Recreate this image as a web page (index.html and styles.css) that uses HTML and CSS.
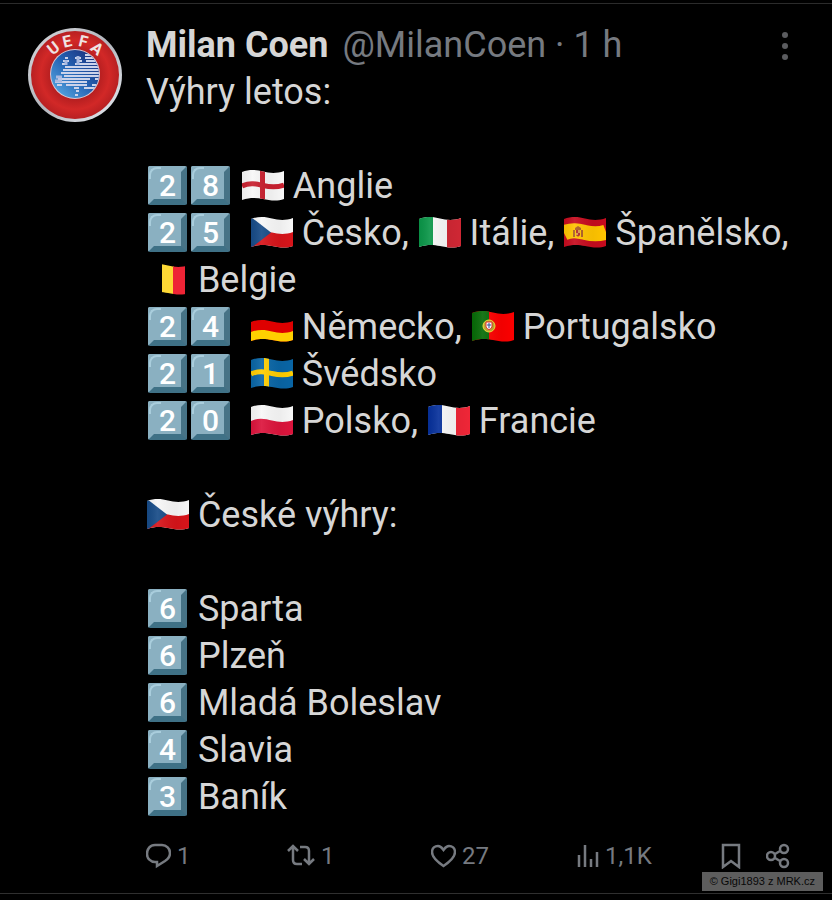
FILE: index.html
```html
<!DOCTYPE html>
<html lang="cs">
<head>
  <meta charset="UTF-8">
  <meta name="viewport" content="width=device-width, initial-scale=1.0">
  <title>Milan Coen</title>
  <link rel="stylesheet" href="styles.css">
</head>
<body>
  <!-- flags, all share the same waving outline -->
  <svg class="defs" width="0" height="0" aria-hidden="true">
    <defs>
      <clipPath id="wave">
        <path d="M0 2C8-1 15 0 21 1.500S34 4 42 1V29C34 32 27 30 21 29S9 27 0 30Z"/>
      </clipPath>
      <linearGradient id="shade" x1="0" x2="1" y1="0" y2="0">
        <stop offset="0" stop-color="#000" stop-opacity=".05"/>
        <stop offset=".25" stop-color="#fff" stop-opacity=".08"/>
        <stop offset=".7" stop-color="#000" stop-opacity=".04"/>
        <stop offset="1" stop-color="#000" stop-opacity="0"/>
      </linearGradient>
      <symbol id="england" viewBox="0 0 42 31">
        <g clip-path="url(#wave)">
          <path fill="#f7f7f7" d="M0 0h42v31H0z"/>
          <path fill="#c8202f" d="M18 0h5v31h-5z"/>
          <path fill="none" stroke="#c8202f" stroke-width="5" d="M0 16C8 12 15 14 21 15.500S34 18 42 15"/>
          <path fill="url(#shade)" d="M0 0h42v31H0z"/>
        </g>
      </symbol>
      <symbol id="czechia" viewBox="0 0 42 31">
        <g clip-path="url(#wave)">
          <path fill="#f7f7f7" d="M0 0h42v31H0z"/>
          <path fill="#d7141a" d="M0 16C8 12 15 14 21 15.500S34 18 42 15V31H0Z"/>
          <path fill="#174b87" d="M0 0L20 15.500 0 31Z"/>
          <path fill="url(#shade)" d="M0 0h42v31H0z"/>
        </g>
      </symbol>
      <symbol id="italy" viewBox="0 0 42 31">
        <g clip-path="url(#wave)">
          <path fill="#f7f7f7" d="M0 0h42v31H0z"/>
          <path fill="#0a9648" d="M0 0h14v31H0z"/>
          <path fill="#cf2734" d="M28 0h14v31H28z"/>
          <path fill="url(#shade)" d="M0 0h42v31H0z"/>
        </g>
      </symbol>
      <symbol id="spain" viewBox="0 0 42 31">
        <g clip-path="url(#wave)">
          <path fill="#c60b1e" d="M0 0h42v31H0z"/>
          <path fill="none" stroke="#ffc400" stroke-width="15" d="M0 16C8 12 15 14 21 15.500S34 18 42 15"/>
          <path fill="#ad5f24" d="M9 13h2v7H9zM17 13h2v7h-2zM11 11l3-2 3 2v2h-6z"/>
          <path fill="#b52a2a" d="M12 13h4v5q-2 3-4 0z"/>
          <path fill="#d99a4a" d="M14 13h2v3h-2zM12 16h2v2h-2z"/>
          <path fill="url(#shade)" d="M0 0h42v31H0z"/>
        </g>
      </symbol>
      <symbol id="belgium" viewBox="0 0 42 31">
        <g clip-path="url(#wave)">
          <path fill="#fdd835" d="M15 0h12v31H15z"/>
          <path fill="#ee2435" d="M26 0h12v31H26z"/>
          <path fill="#000" d="M38 0h4v31h-4z"/>
        </g>
      </symbol>
      <symbol id="germany" viewBox="0 0 42 31">
        <g clip-path="url(#wave)">
          <path fill="#de0000" d="M0 11C8 8 15 9 21 10.500S34 13 42 10V31H0Z"/>
          <path fill="#ffcf00" d="M0 21C8 18 15 19 21 20.500S34 23 42 20V31H0Z"/>
        </g>
      </symbol>
      <symbol id="portugal" viewBox="0 0 42 31">
        <g clip-path="url(#wave)">
          <path fill="#fb0000" d="M0 0h42v31H0z"/>
          <path fill="#066b06" d="M0 0h17v31H0z"/>
          <circle cx="17" cy="15" r="6" fill="#b8a52b" stroke="#f5dd31"/>
          <path fill="#fff" stroke="#e32020" d="M14 11h6v5q-3 5-6 0z"/>
          <path fill="none" stroke="#294b93" d="M17 12v5M15 14h4"/>
          <path fill="url(#shade)" d="M0 0h42v31H0z"/>
        </g>
      </symbol>
      <symbol id="sweden" viewBox="0 0 42 31">
        <g clip-path="url(#wave)">
          <path fill="#0965a5" d="M0 0h42v31H0z"/>
          <path fill="#ffcd00" d="M13 0h5v31h-5z"/>
          <path fill="none" stroke="#ffcd00" stroke-width="5" d="M0 16C8 12 15 14 21 15.500S34 18 42 15"/>
          <path fill="url(#shade)" d="M0 0h42v31H0z"/>
        </g>
      </symbol>
      <symbol id="poland" viewBox="0 0 42 31">
        <g clip-path="url(#wave)">
          <path fill="#f7f7f7" d="M0 0h42v31H0z"/>
          <path fill="#dc143c" d="M0 16C8 12 15 14 21 15.500S34 18 42 15V31H0Z"/>
          <path fill="url(#shade)" d="M0 0h42v31H0z"/>
        </g>
      </symbol>
      <symbol id="france" viewBox="0 0 42 31">
        <g clip-path="url(#wave)">
          <path fill="#f7f7f7" d="M0 0h42v31H0z"/>
          <path fill="#06309b" d="M0 0h14v31H0z"/>
          <path fill="#ef2637" d="M28 0h14v31H28z"/>
          <path fill="url(#shade)" d="M0 0h42v31H0z"/>
        </g>
      </symbol>
    </defs>
  </svg>

  <article class="post">
    <svg class="avatar" viewBox="0 0 94 94" role="img" aria-label="UEFA">
      <defs>
        <linearGradient id="rim" x1="0" y1="0" x2="1" y2="1">
          <stop offset="0" stop-color="#d5d8dc"/>
          <stop offset=".5" stop-color="#b3b6bd"/>
          <stop offset="1" stop-color="#e9edf3"/>
        </linearGradient>
        <radialGradient id="red" cx=".5" cy=".5" r=".5">
          <stop offset=".5" stop-color="#b01d1f"/>
          <stop offset=".78" stop-color="#d22827"/>
          <stop offset="1" stop-color="#b82022"/>
        </radialGradient>
        <linearGradient id="sea" x1="0" y1="1" x2="1" y2="0">
          <stop offset="0" stop-color="#5fb4ea"/>
          <stop offset=".5" stop-color="#2563b4"/>
          <stop offset="1" stop-color="#1a2670"/>
        </linearGradient>
        <clipPath id="globe"><circle cx="47" cy="46" r="24"/></clipPath>
      </defs>
      <circle cx="47" cy="47" r="47" fill="url(#rim)"/>
      <circle cx="47" cy="47" r="44" fill="url(#red)"/>
      <circle cx="47" cy="46" r="25" fill="#d9c9d4"/>
      <circle cx="47" cy="46" r="24" fill="url(#sea)"/>
      <g clip-path="url(#globe)" fill="none" stroke="#ccd3ea">
        <path stroke-width="2" d="M57 27h14M37 30h3M47 30h6M57 30h16M35 33h6M49 33h5M58 33h15M34 36h5M47 36h25M37 39h35M35 42h37M33 45h39M36 48h36M30 51h32M67 51h6M27 54h32M70 54h3M29 57h5M38 57h21M64 57h8M46 60h5M56 60h14M48 63h3M47 67h3"/>
        <path stroke-width="3" stroke="#a9b9e0" d="M28 49h6M27 53h7M50 28v9M38 32v5"/>
      </g>
      <g class="avatar-text">
        <text x="47" y="18" transform="rotate(-39 47 47)">U</text>
        <text x="47" y="18" transform="rotate(-13 47 47)">E</text>
        <text x="47" y="18" transform="rotate(14 47 47)">F</text>
        <text x="47" y="18" transform="rotate(40 47 47)">A</text>
      </g>
    </svg>

    <div class="content">
      <header class="post-header">
        <strong class="name">Milan Coen</strong>
        <span class="handle">@MilanCoen · 1 h</span>
        <button type="button" class="more" aria-label="Další">
          <svg width="8" height="30" viewBox="0 0 8 30" fill="#5b5c5f">
            <circle cx="4" cy="4" r="3"/>
            <circle cx="4" cy="15" r="3"/>
            <circle cx="4" cy="26" r="3"/>
          </svg>
        </button>
      </header>

      <div class="text">
        <p>Výhry letos:</p>
        <div class="block">
          <p><span class="key">2</span><span class="key">8</span> <svg class="flag"><use href="#england"/></svg> Anglie</p>
          <p><span class="key">2</span><span class="key">5</span>  <svg class="flag"><use href="#czechia"/></svg> Česko, <svg class="flag"><use href="#italy"/></svg> Itálie, <svg class="flag"><use href="#spain"/></svg> Španělsko, <svg class="flag"><use href="#belgium"/></svg> Belgie</p>
          <p><span class="key">2</span><span class="key">4</span>  <svg class="flag"><use href="#germany"/></svg> Německo, <svg class="flag"><use href="#portugal"/></svg> Portugalsko</p>
          <p><span class="key">2</span><span class="key">1</span>  <svg class="flag"><use href="#sweden"/></svg> Švédsko</p>
          <p><span class="key">2</span><span class="key">0</span>  <svg class="flag"><use href="#poland"/></svg> Polsko, <svg class="flag"><use href="#france"/></svg> Francie</p>
        </div>
        <p class="block"><svg class="flag"><use href="#czechia"/></svg> České výhry:</p>
        <div class="block">
          <p><span class="key">6</span> Sparta</p>
          <p><span class="key">6</span> Plzeň</p>
          <p><span class="key">6</span> Mladá Boleslav</p>
          <p><span class="key">4</span> Slavia</p>
          <p><span class="key">3</span> Baník</p>
        </div>
      </div>

      <footer class="actions">
        <button type="button" class="action">
          <svg width="25" height="26" viewBox="0 0 25 26"><path d="M9 2h7a8 8 0 0 1 8 8c0 4-2 6-5 8l-8 5v-4H9a8 8 0 0 1-8-8c0-5 3-9 8-9z"/></svg>
          1
        </button>
        <button type="button" class="action">
          <svg width="28" height="26" viewBox="0 0 28 26"><path d="M1 8l5-5 5 5M6 4v13q0 4 4 4h5M13 4h5q4 0 4 4v13M17 16l5 5 5-5"/></svg>
          1
        </button>
        <button type="button" class="action">
          <svg width="25" height="26" viewBox="0 0 25 26"><path d="M12.500 23C5 18 1 14 1 9c0-4 3-6 6-6s4 2 5.500 4C14 5 15 3 18 3s6 2 6 6c0 5-4 9-11.500 14z"/></svg>
          27
        </button>
        <button type="button" class="action">
          <svg width="22" height="26" viewBox="0 0 22 26"><path d="M2 24V12M8 24V2M14 24v-8M20 24V9"/></svg>
          1,1K
        </button>
        <div class="tools">
          <button type="button" class="action" aria-label="Záložka">
            <svg width="20" height="26" viewBox="0 0 20 26"><path d="M2 2h16v22l-8-6-8 6z"/></svg>
          </button>
          <button type="button" class="action" aria-label="Sdílet">
            <svg width="24" height="26" viewBox="0 0 24 26"><circle cx="5" cy="13" r="4"/><circle cx="18" cy="6" r="4"/><circle cx="18" cy="20" r="4"/><path d="M9 11l5-3M9 15l5 3"/></svg>
          </button>
        </div>
      </footer>
    </div>
    <small class="watermark">© Gigi1893 z MRK.cz</small>
  </article>
</body>
</html>
```

FILE: styles.css
```css
* {
  box-sizing: border-box;
}
body {
  margin: 0;
  padding: 3px 0 0;
  background-color: #000;
  color: #d6d6d6;
  font-family: Roboto, sans-serif;
  font-size: 36px;
  line-height: 47px;
}
p {
  margin: 0;
}
button {
  padding: 0;
  border: none;
  background: none;
  color: inherit;
  font: inherit;
  cursor: pointer;
}
.defs {
  position: absolute;
}
.post {
  position: relative;
  display: flex;
  gap: 24px;
  padding: 18px 28px 22px;
  border-top: 1px solid #2b2b2b;
  border-bottom: 1px solid #2f2f2f;
}
.avatar {
  flex: none;
  width: 94px;
  height: 94px;
  margin-top: 6px;
}
.avatar-text {
  fill: #efe3e3;
  font-size: 16px;
  font-weight: bold;
  text-anchor: middle;
}
.content {
  flex: 1;
  min-width: 0;
}
.post-header {
  display: flex;
  align-items: center;
  gap: 14px;
}
.handle {
  color: #767a80;
}
.more {
  display: flex;
  margin-left: auto;
  padding: 4px 15px;
}
.text p {
  white-space: pre-wrap;
}
.text .block {
  margin-top: 47px;
}

/* keycap emoji */
.key {
  display: inline-flex;
  align-items: center;
  justify-content: center;
  position: relative;
  width: 39px;
  height: 39px;
  margin: 0 2px;
  border: 6px solid #8ab0c1;
  border-right-color: #477386;
  border-bottom-color: #3f7186;
  border-radius: 2px;
  background-color: #8ab0c1;
  color: #fff;
  font-size: 30px;
  font-weight: 500;
  line-height: 27px;
  vertical-align: 2px;
}
.key::before {
  content: "";
  position: absolute;
  top: -5px;
  left: -5px;
  width: 10px;
  height: 10px;
  border-top: 2px solid #a9cddc;
  border-left: 2px solid #a9cddc;
  border-radius: 8px 0 0 0;
}
.flag {
  width: 42px;
  height: 31px;
  margin-left: 1px;
  vertical-align: -3px;
}

.actions {
  display: grid;
  grid-template-columns: 141fr 144fr 146fr 144fr auto;
  align-items: center;
  margin-top: 20px;
  padding-right: 14px;
  color: #767a80;
  font-size: 24px;
  line-height: 30px;
}
.action {
  display: flex;
  align-items: center;
  gap: 6px;
}
.action svg {
  fill: none;
  stroke: #767a80;
  stroke-width: 2.5;
}
.tools {
  display: flex;
  gap: 25px;
}
.watermark {
  position: absolute;
  right: 9px;
  bottom: 2px;
  padding: 0 8px;
  background-color: #5d5d5d;
  color: #080808;
  font-family: "Liberation Sans", sans-serif;
  font-size: 11px;
  line-height: 19px;
}
```
